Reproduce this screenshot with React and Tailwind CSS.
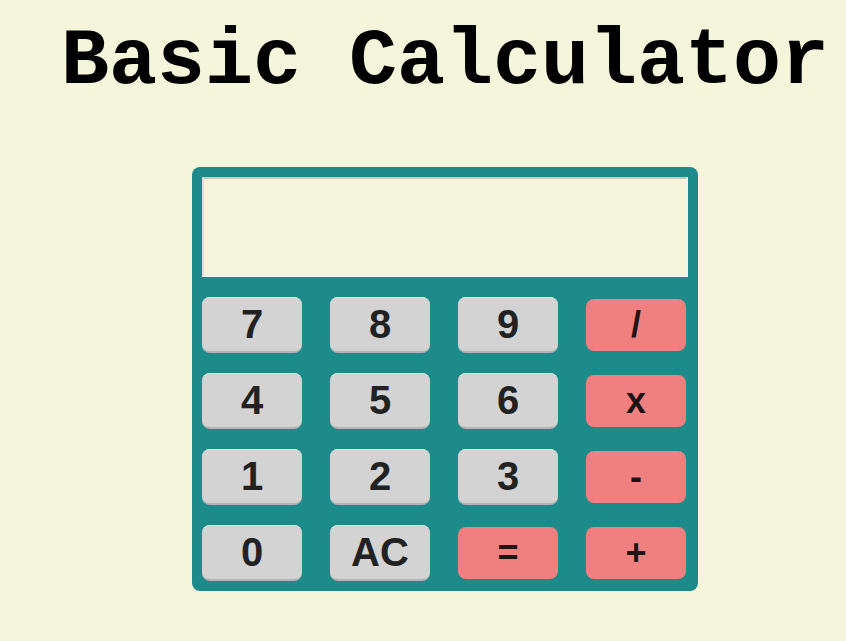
import React, { useState } from 'react';

const keys = [
  ['7', 'num'], ['8', 'num'], ['9', 'num'], ['/', 'op'],
  ['4', 'num'], ['5', 'num'], ['6', 'num'], ['x', 'op'],
  ['1', 'num'], ['2', 'num'], ['3', 'num'], ['-', 'op'],
  ['0', 'num'], ['AC', 'num'], ['=', 'op'], ['+', 'op'],
];

const App = () => {
  const [display, setDisplay] = useState('');

  const press = (k) => {
    if (k === 'AC') return setDisplay('');
    if (k === '=') {
      try {
        // eslint-disable-next-line no-new-func
        setDisplay(String(Function(`return (${display.replace(/x/g, '*')})`)()));
      } catch {
        setDisplay('Error');
      }
      return;
    }
    setDisplay(display + k);
  };

  return (
    <div className="min-h-screen bg-[#f5f5dc] flex flex-col items-center pl-[44px] font-['Liberation_Sans',Arial,sans-serif]">
      {/* Title */}
      <h1 className="mt-[22px] text-[80px] leading-none font-bold font-['Liberation_Mono','Courier_New',monospace] text-black">
        Basic Calculator
      </h1>

      {/* Calculator body */}
      <div className="mt-[65px] w-[506px] bg-[#1c8b8a] rounded-lg p-[10px]">
        <input
          value={display}
          readOnly
          className="w-full h-[100px] bg-[#f5f5dc] border-2 border-t-[#c8c8c8] border-l-[#dcdcdc] border-b-[#f2f2f2] border-r-[#f2f2f2] outline-none px-3 text-[40px] text-right"
        />
        <div className="mt-[20px] grid grid-cols-[100px_100px_100px_100px] gap-x-[28px] gap-y-[20px]">
          {keys.map(([k, type]) => (
            <div key={k} className="h-[56px] flex items-center">
              {type === 'num' ? (
                <button
                  onClick={() => press(k)}
                  className="w-[100px] h-[56px] rounded-lg bg-[#d3d3d3] border-b-2 border-[#b3b3b3] shadow-[inset_0_1px_0_#dedede] text-[40px] font-bold text-[#222] leading-none"
                >
                  {k}
                </button>
              ) : (
                <button
                  onClick={() => press(k)}
                  className="w-[100px] h-[52px] rounded-lg bg-[#f08080] text-[36px] font-bold text-[#1f1414] leading-none"
                >
                  {k}
                </button>
              )}
            </div>
          ))}
        </div>
      </div>
    </div>
  );
};

export default App;
